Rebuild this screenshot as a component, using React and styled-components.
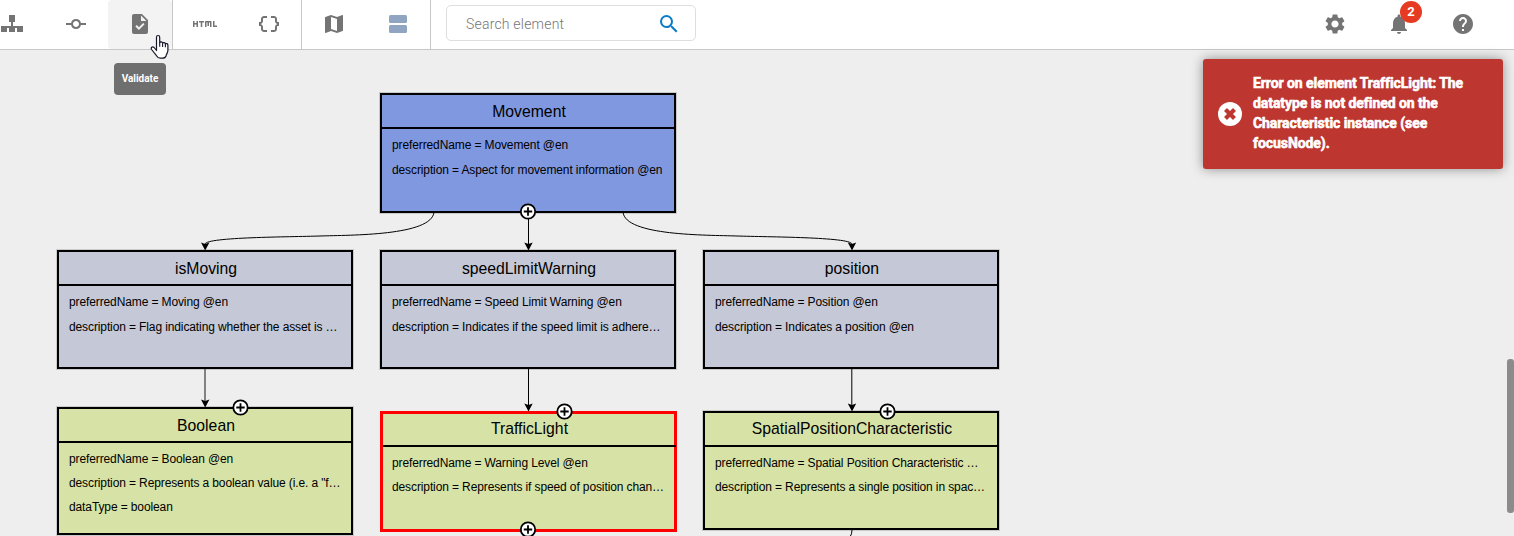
import React from "react";
import styled, { createGlobalStyle } from "styled-components";
import {
  MdCommit, MdTask, MdHtml, MdDataObject, MdMap, MdSearch,
  MdSettings, MdNotifications, MdHelp,
} from "react-icons/md";

const Global = createGlobalStyle`
  * { box-sizing: border-box; }
  body { margin: 0; overflow: hidden; background: #eeeeee; }
`;

const Page = styled.div`
  position: relative;
  display: flex;
  flex-direction: column;
  width: 1514px;
  height: 536px;
  overflow: hidden;
  background: #eeeeee;
  font-family: Roboto, "Liberation Sans", sans-serif;
`;

const Toolbar = styled.header`
  display: flex;
  flex: none;
  height: 50px;
  padding-right: 19px;
  background: #fff;
  border-bottom: 1px solid #c8c8c8;
`;

const Tools = styled.div`
  display: flex;
  margin-left: ${(p) => p.$offset || 0}px;
  border-right: 1px solid #c8c8c8;
`;

const ToolButton = styled.button`
  position: relative;
  display: flex;
  align-items: center;
  justify-content: center;
  width: 64px;
  height: 49px;
  padding: 0 0 1px;
  border: 0;
  border-radius: 4px;
  background: ${(p) => (p.$active ? "#f3f3f3" : "transparent")};
  color: #747474;
  font-size: 24px;
`;

const SearchBox = styled.label`
  display: flex;
  align-items: center;
  width: 250px;
  height: 36px;
  margin: 5px auto 0 15px;
  padding: 1px 14px 0 18px;
  border: 1px solid #dedede;
  border-radius: 5px;
  color: #0a7bc8;
  font-size: 24px;
`;

const SearchInput = styled.input`
  flex: 1;
  min-width: 0;
  padding: 0 0 0 1px;
  border: 0;
  outline: 0;
  font: 300 14px Roboto, sans-serif;
  letter-spacing: 0.2px;
  &::placeholder { color: #757575; opacity: 1; }
`;

const Badge = styled.span`
  position: absolute;
  left: 33px;
  top: 1px;
  width: 22px;
  height: 22px;
  border-radius: 50%;
  background: #e63b22;
  color: #fff;
  font: 700 13px/22px Roboto, sans-serif;
  text-align: center;
`;

const Tooltip = styled.div`
  position: absolute;
  left: 114px;
  top: 63px;
  width: 52px;
  height: 32px;
  border-radius: 4px;
  background: #6f6f6f;
  color: #fff;
  font: 700 10px/32px Roboto, sans-serif;
  text-align: center;
`;

const Toast = styled.div`
  position: absolute;
  left: 1203px;
  top: 59px;
  display: flex;
  align-items: center;
  width: 300px;
  height: 110px;
  padding: 0 15px;
  gap: 11px;
  border-radius: 3px;
  background: #bd362f;
  box-shadow: 0 0 12px rgba(0, 0, 0, 0.4);
  color: #fff;
`;

const ToastText = styled.p`
  flex: 1;
  margin: 0;
  padding-bottom: 2px;
  font: 700 14px/20px Roboto, sans-serif;
  letter-spacing: -0.07px;
  -webkit-text-stroke: 0.6px #fff;
  white-space: pre-line;
`;

const Canvas = styled.main`
  position: relative;
  flex: 1;
`;

const Edges = styled.svg`
  position: absolute;
  left: 0;
  top: 0;
`;

const Node = styled.section`
  position: absolute;
  left: ${(p) => p.$x}px;
  top: ${(p) => p.$y}px;
  width: ${(p) => p.$w}px;
  height: ${(p) => p.$h}px;
  border: ${(p) => (p.$error ? "3px solid #f00" : "2px solid #000")};
  box-shadow: 0 0 0 1px rgba(0, 0, 0, ${(p) => (p.$error ? 0 : 0.15)});
  background: ${(p) => p.$fill};
  color: #000;
  font-family: "Liberation Sans", Arial, sans-serif;
`;

const NodeTitle = styled.h2`
  height: ${(p) => p.$h}px;
  margin: 0 -2px 0 0;
  border-bottom: 2px solid #000;
  font-size: 15.75px;
  font-weight: 400;
  line-height: ${(p) => p.$line}px;
  text-align: center;
`;

const NodeRows = styled.div`
  display: flex;
  flex-direction: column;
  padding: 4px 0 0 ${(p) => (p.$error ? 9 : 10)}px;
`;

const NodeRow = styled.div`
  height: ${(p) => p.$h}px;
  font-size: 12px;
  letter-spacing: -0.115px;
  line-height: ${(p) => p.$h}px;
  white-space: nowrap;
`;

const Scrollbar = styled.div`
  position: absolute;
  right: 0;
  top: 309px;
  width: 7px;
  height: 154px;
  border-radius: 3px;
  background: #8b8b8b;
`;

const Pointer = styled.svg`
  position: absolute;
  left: 150px;
  top: 34px;
`;

const PURPLE = "#8098e0";
const GREY = "#c5c8d6";
const GREEN = "#d7e3a6";

const nodes = [
  { title: "Movement", x: 380, y: 43, w: 296, h: 120, head: 34, line: 33, row: 25, fill: PURPLE,
    rows: ["preferredName = Movement @en", "description = Aspect for movement information @en"] },
  { title: "isMoving", x: 57, y: 200, w: 296, h: 119, head: 34, line: 33, row: 25, fill: GREY,
    rows: ["preferredName = Moving @en", "description = Flag indicating whether the asset is …"] },
  { title: "speedLimitWarning", x: 380, y: 200, w: 296, h: 119, head: 34, line: 33, row: 25, fill: GREY,
    rows: ["preferredName = Speed Limit Warning @en", "description = Indicates if the speed limit is adhere…"] },
  { title: "position", x: 703, y: 200, w: 296, h: 119, head: 34, line: 33, row: 25, fill: GREY,
    rows: ["preferredName = Position @en", "description = Indicates a position @en"] },
  { title: "Boolean", x: 57, y: 357, w: 296, h: 128, head: 34, line: 33, row: 24, fill: GREEN,
    rows: ["preferredName = Boolean @en", "description = Represents a boolean value (i.e. a \"f…", "dataType = boolean"] },
  { title: "TrafficLight", x: 380, y: 361, w: 297, h: 121, head: 33, line: 29, row: 24, fill: GREEN, error: true,
    rows: ["preferredName = Warning Level @en", "description = Represents if speed of position chan…"] },
  { title: "SpatialPositionCharacteristic", x: 703, y: 361, w: 296, h: 119, head: 34, line: 31, row: 24, fill: GREEN,
    rows: ["preferredName = Spatial Position Characteristic …", "description = Represents a single position in spac…"] },
];

const arrows = [[205.2, 200.5], [528.5, 200.5], [852, 200.5], [205.2, 357.5], [528.5, 361.5], [852, 361.5]];
const pluses = [[528, 161.5], [240.5, 357.5], [564.5, 361.5], [887.5, 361.5], [528, 479.5]];

const Sitemap = () => (
  <svg width="24" height="24" viewBox="0 0 24 24" fill="currentColor">
    <path d="M9 3h6v7H13v4h7v0h3v6h-6v-4h-2v4H9v-4H7v4H1v-6h10v-4H9z" />
  </svg>
);

const Agenda = () => (
  <svg width="24" height="24" viewBox="0 0 24 24" fill="#8fa5c1">
    <rect x="3" y="3" width="18" height="8" rx="1.5" />
    <rect x="3" y="13" width="18" height="8" rx="1.5" />
  </svg>
);

const ErrorIcon = () => (
  <svg width="24" height="24" viewBox="0 0 24 24">
    <circle cx="12" cy="12" r="12" fill="#fff" />
    <path d="M7.5 7.5l9 9M16.5 7.5l-9 9" stroke="#bd362f" strokeWidth="4.2" />
  </svg>
);

export default function App() {
  return (
    <Page>
      <Global />
      <Toolbar>
        <Tools $offset={-20}>
          <ToolButton><Sitemap /></ToolButton>
          <ToolButton><MdCommit /></ToolButton>
          <ToolButton $active><MdTask /></ToolButton>
        </Tools>
        <Tools>
          <ToolButton><MdHtml /></ToolButton>
          <ToolButton><MdDataObject /></ToolButton>
        </Tools>
        <Tools>
          <ToolButton><MdMap /></ToolButton>
          <ToolButton><Agenda /></ToolButton>
        </Tools>
        <SearchBox>
          <SearchInput placeholder="Search element" />
          <MdSearch />
        </SearchBox>
        <ToolButton><MdSettings /></ToolButton>
        <ToolButton><MdNotifications /><Badge>2</Badge></ToolButton>
        <ToolButton><MdHelp /></ToolButton>
      </Toolbar>

      <Canvas>
        {nodes.map((n) => (
          <Node key={n.title} $x={n.x} $y={n.y} $w={n.w} $h={n.h} $fill={n.fill} $error={n.error}>
            <NodeTitle $h={n.head} $line={n.line}>{n.title}</NodeTitle>
            <NodeRows $error={n.error}>
              {n.rows.map((r) => <NodeRow key={r} $h={n.row}>{r}</NodeRow>)}
            </NodeRows>
          </Node>
        ))}
        <Edges width="1514" height="486" fill="none" stroke="#000">
          <path d="M434 162C432 186 350 185 320 186C290 187 207 187 205 194" />
          <path d="M623 162C625 186 707 185 737 186C767 187 850 187 852 194" />
          <path d="M528.5 162V195M528.5 319V356M851.8 319V356M852 480q0 4-2 7" />
          <path d="M205 319V352" stroke="#666" strokeWidth="1.6" />
          {arrows.map(([x, y]) => (
            <path key={`${x}-${y}`} d={`M${x} ${y}l-4.2-8l4.2 1.5l4.2-1.5z`} fill="#000" stroke="none" />
          ))}
          {pluses.map(([x, y]) => (
            <g key={`${x}-${y}`} strokeWidth="1.8">
              <circle cx={x} cy={y} r="7.2" fill="#fff" />
              <path d={`M${x - 4.2} ${y}h8.4M${x} ${y - 4.2}v8.4`} />
            </g>
          ))}
        </Edges>
        <Scrollbar />
      </Canvas>

      <Tooltip>Validate</Tooltip>
      <Toast>
        <ErrorIcon />
        <ToastText>{"Error on element TrafficLight: The\ndatatype is not defined on the\nCharacteristic instance (see\nfocusNode)."}</ToastText>
      </Toast>
      <Pointer width="20" height="26" viewBox="0 0 20 26">
        <path
          d="M6.5 16.5V3.3c0-2.4 3.2-2.4 3.2 0v5.5c.4-1.4 2.7-1.2 2.9.4.6-1.1 2.6-.8 2.8.7.7-.8 2.5-.3 2.5 1.3v5.3c0 2.1-1.5 3.5-1.8 5.2-.5 1.4-1.6 2.5-3.6 2.5h-2c-2 0-3.1-.9-4-2.5L1.6 15.5c-1.2-2 .8-3.4 2.5-2z"
          fill="#fff" stroke="#16162a" strokeWidth="1.2" strokeLinejoin="round"
        />
        <path d="M9.7 8.5v4.2M12.6 9.2v3.7M15.4 10v3.2" stroke="#16162a" strokeWidth="1.1" />
      </Pointer>
    </Page>
  );
}
